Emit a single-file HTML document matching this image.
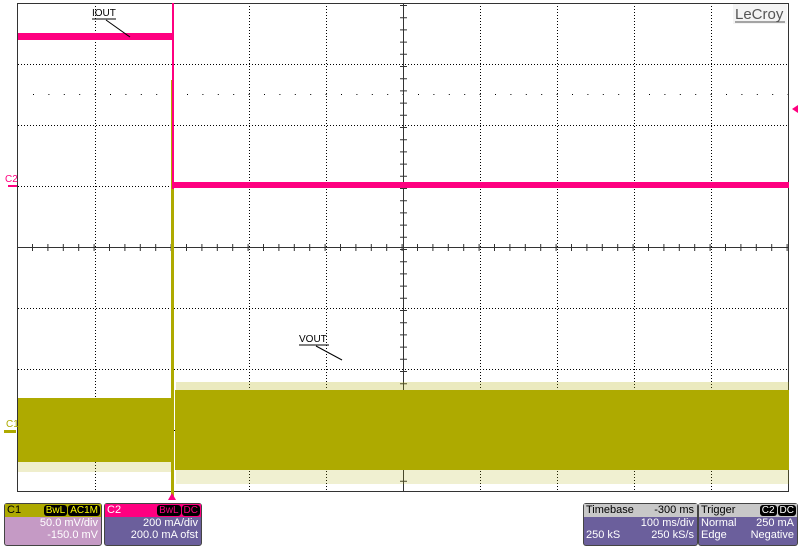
<!DOCTYPE html><html><head><style>
body{margin:0;width:800px;height:547px;background:#fff;overflow:hidden;font-family:"Liberation Sans",sans-serif;position:relative}
.box{position:absolute;border:1px solid #444;border-radius:3px;font-size:11px;color:#fff;line-height:12px}
.hd{height:13px;padding:0 2px;position:relative}
.r{text-align:right;padding-right:3px}
.tag{background:#000;border-radius:3px;padding:0 2px;font-size:10px;margin-left:1px;color:#fff}
</style></head><body>
<svg width="800" height="500" style="position:absolute;left:0;top:0">
<g stroke="#000" stroke-width="1" stroke-dasharray="1,2">
<line x1="95.5" y1="3" x2="95.5" y2="491"/><line x1="172.5" y1="3" x2="172.5" y2="491"/><line x1="249.5" y1="3" x2="249.5" y2="491"/><line x1="326.5" y1="3" x2="326.5" y2="491"/><line x1="480.5" y1="3" x2="480.5" y2="491"/><line x1="557.5" y1="3" x2="557.5" y2="491"/><line x1="634.5" y1="3" x2="634.5" y2="491"/><line x1="711.5" y1="3" x2="711.5" y2="491"/>
<line x1="18" y1="64.5" x2="788" y2="64.5"/><line x1="18" y1="125.5" x2="788" y2="125.5"/><line x1="18" y1="186.5" x2="788" y2="186.5"/><line x1="18" y1="308.5" x2="788" y2="308.5"/><line x1="18" y1="369.5" x2="788" y2="369.5"/><line x1="18" y1="430.5" x2="788" y2="430.5"/>
<line x1="33" y1="94.5" x2="788" y2="94.5" stroke-dasharray="1,14.4"/>
</g>
<line x1="18" y1="247.5" x2="788" y2="247.5" stroke="#333"/>
<line x1="403.5" y1="3" x2="403.5" y2="491" stroke="#333"/>
<line x1="18" y1="247.5" x2="788" y2="247.5" stroke="#333" stroke-width="7" stroke-dasharray="1,14.4" stroke-dashoffset="-14"/>
<line x1="403.5" y1="3" x2="403.5" y2="491" stroke="#333" stroke-width="7" stroke-dasharray="1,11.2" stroke-dashoffset="-2"/>
<rect x="17.5" y="3.5" width="771" height="488" fill="none" stroke="#333"/>
<!-- yellow -->
<rect x="18" y="398" width="154" height="64" fill="#aeaa00"/>
<rect x="175" y="390" width="614" height="80" fill="#aeaa00"/>
<rect x="176" y="382" width="613" height="8" fill="#aeaa00" opacity=".25"/>
<rect x="176" y="470" width="613" height="14" fill="#aeaa00" opacity=".18"/>
<rect x="18" y="462" width="154" height="10" fill="#aeaa00" opacity=".2"/>
<rect x="171" y="80" width="3" height="420" fill="#aeaa00"/>
<rect x="4" y="430" width="12" height="3" fill="#aeaa00"/>
<text x="6" y="427" font-size="10" fill="#aeaa00" font-family="Liberation Sans">C1</text>
<!-- pink -->
<rect x="18" y="33" width="154" height="7" fill="#ff0080"/>
<rect x="172" y="3" width="2" height="186" fill="#ff0080"/>
<rect x="172" y="182" width="617" height="6" fill="#ff0080"/>
<rect x="8" y="185" width="9" height="2" fill="#ff0080"/>
<text x="5" y="182" font-size="10" fill="#ff0080">C2</text>
<polygon points="792,109 798,105 798,113" fill="#ff0080"/>
<polygon points="172,493 168,500 176,500" fill="#ff0080"/>
<!-- labels -->
<text x="92" y="16" font-size="10">IOUT</text><line x1="92" y1="19" x2="116" y2="19" stroke="#000"/><line x1="106" y1="20" x2="130" y2="37" stroke="#000"/>
<text x="299" y="342" font-size="10">VOUT</text><line x1="299" y1="345" x2="329" y2="345" stroke="#000"/><line x1="316" y1="346" x2="342" y2="360" stroke="#000"/>
<rect x="733" y="4" width="54" height="20" fill="#f4f4f4"/>
<text x="735" y="19" font-size="15" fill="#555">LeCroy</text><line x1="735" y1="22" x2="785" y2="22" stroke="#555"/>
</svg>
<div class="box" style="left:4px;top:503px;width:96px;height:41px;background:#c59ac5">
<div class="hd" style="background:#aeaa00;color:#000">C1<span style="position:absolute;right:1px;top:0"><span class="tag" style="color:#ff0">BwL</span><span class="tag" style="color:#ff0">AC1M</span></span></div>
<div class="r">50.0 mV/div</div><div class="r">-150.0 mV</div></div>
<div class="box" style="left:104px;top:503px;width:96px;height:41px;background:#6b5f9c">
<div class="hd" style="background:#ff0080">C2<span style="position:absolute;right:1px;top:0"><span class="tag" style="color:#ff0080">BwL</span><span class="tag" style="color:#ff0080">DC</span></span></div>
<div class="r">200 mA/div</div><div class="r">200.0 mA ofst</div></div>
<div class="box" style="left:583px;top:503px;width:113px;height:41px;background:#6b5f9c">
<div class="hd" style="background:#c8c8c8;color:#000">Timebase<span style="position:absolute;right:3px">-300 ms</span></div>
<div class="r">100 ms/div</div><div style="padding-left:2px">250 kS<span style="float:right;padding-right:3px">250 kS/s</span></div></div>
<div class="box" style="left:698px;top:503px;width:98px;height:41px;background:#6b5f9c">
<div class="hd" style="background:#c8c8c8;color:#000">Trigger<span style="position:absolute;right:1px;top:0;white-space:nowrap"><span class="tag">C2</span><span class="tag">DC</span></span></div>
<div style="padding-left:2px">Normal<span style="float:right;padding-right:3px">250 mA</span></div><div style="padding-left:2px">Edge<span style="float:right;padding-right:3px">Negative</span></div></div>
</body></html>
